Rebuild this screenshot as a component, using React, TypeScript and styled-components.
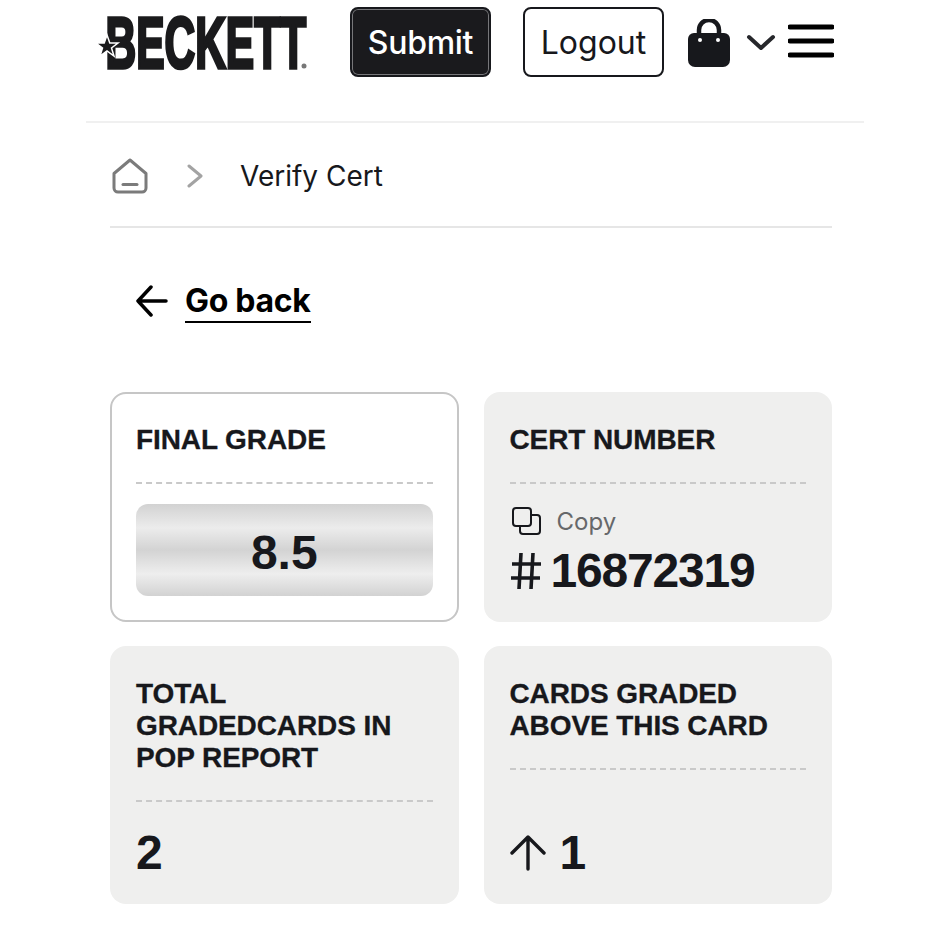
import React from 'react';
import styled, { createGlobalStyle } from 'styled-components';

const GlobalStyle = createGlobalStyle`
  html, body {
    margin: 0;
    padding: 0;
    background: #fff;
    color: #17181c;
    font-family: Inter, "Liberation Sans", sans-serif;
  }
`;

const Page = styled.div`
  width: 950px;
  height: 950px;
  overflow: hidden;
  box-sizing: border-box;
  padding: 0 86px;
`;

const Header = styled.header`
  height: 121px;
  border-bottom: 2px solid #f0f0f0;
  display: flex;
  align-items: flex-start;
  padding-left: 10px;
`;

const LogoWrap = styled.div`
  width: 212px;
  height: 82px;
  margin-top: 3px;
`;

const Button = styled.button<{ $dark?: boolean }>`
  width: 141px;
  height: 70px;
  margin-top: 7px;
  box-sizing: border-box;
  border-radius: 8px;
  border: 2px solid #17181c;
  background: ${p => (p.$dark ? '#1a1a1d' : '#fff')};
  color: ${p => (p.$dark ? '#fff' : '#17181c')};
  box-shadow: ${p => (p.$dark ? 'inset 0 0 0 1px #77777a' : 'none')};
  font-family: Inter, "Liberation Sans", sans-serif;
  font-size: 32px;
  font-weight: ${p => (p.$dark ? 500 : 400)};
  letter-spacing: ${p => (p.$dark ? '-0.3px' : '0')};
  padding: 0;
`;

const SubmitButton = styled(Button)`
  margin-left: 42px;
`;

const LogoutButton = styled(Button)`
  margin-left: 32px;
`;

const IconButton = styled.div`
  display: flex;
  align-items: center;
  margin-left: 24px;
  margin-top: 19px;
`;

const Chevron = styled.svg`
  margin-left: 16px;
`;

const Burger = styled.svg`
  margin-left: 12px;
  margin-top: -4px;
`;

const Main = styled.main`
  padding: 0 32px 0 24px;
`;

const Breadcrumb = styled.nav`
  height: 105px;
  border-bottom: 2px solid #e6e6e6;
  display: flex;
  align-items: center;
  padding: 3px 0 0 2px;
  box-sizing: border-box;
`;

const Crumb = styled.span`
  margin-left: 37px;
  font-size: 28px;
`;

const CrumbChevron = styled.svg`
  margin-left: 39px;
`;

const BackLink = styled.a`
  display: flex;
  align-items: center;
  gap: 17px;
  margin: 54px 0 0 26px;
  height: 40px;
`;

const BackArrow = styled.svg`
  margin-top: -2px;
`;

const BackText = styled.span`
  font-size: 32px;
  font-weight: 700;
  letter-spacing: -0.3px;
  color: #000;
  line-height: 40px;
  border-bottom: 2px solid #000;
`;

const Grid = styled.section`
  display: grid;
  grid-template-columns: 348.5px 348.5px;
  grid-template-rows: 230px 258px;
  gap: 24px 25px;
  margin-top: 70px;
`;

const Card = styled.article<{ $outlined?: boolean }>`
  box-sizing: border-box;
  border-radius: 16px;
  background: ${p => (p.$outlined ? '#fff' : '#efefee')};
  border: ${p => (p.$outlined ? '2px solid #c6c6c6' : 'none')};
  padding: ${p => (p.$outlined ? '30px 24px 24px' : '32px 26px 23px')};
  display: flex;
  flex-direction: column;
`;

const Title = styled.h2`
  margin: 0;
  padding-bottom: 26px;
  border-bottom: 2px dashed #c9c9c9;
  font-family: "Liberation Sans", Arial, sans-serif;
  font-size: 28px;
  line-height: 32px;
  font-weight: 700;
  letter-spacing: -0.1px;
  -webkit-text-stroke: 0.3px #17181c;
`;

const GradeBar = styled.div`
  margin-top: 20px;
  height: 92px;
  box-sizing: border-box;
  padding-top: 5px;
  border-radius: 12px;
  background: linear-gradient(180deg, #d2d2d2 0%, #ececec 26%, #d3d3d3 50%, #eeeeee 76%, #d2d2d2 100%);
  display: flex;
  align-items: center;
  justify-content: center;
`;

const BigNumber = styled.span<{ $tight?: boolean }>`
  font-family: "Liberation Sans", Arial, sans-serif;
  font-size: 48px;
  font-weight: 700;
  line-height: 56px;
  letter-spacing: ${p => (p.$tight ? '-1.2px' : '0')};
`;

const CopyRow = styled.div`
  display: flex;
  align-items: center;
  gap: 16px;
  margin-top: 22px;
  height: 30px;
  color: #66686a;
  font-size: 24px;
  padding-left: 1px;
`;

const CertRow = styled.div`
  display: flex;
  align-items: center;
  gap: 10px;
  margin-top: 7px;
  padding-left: 1px;
`;

const ValueRow = styled.div`
  margin-top: auto;
  display: flex;
  align-items: center;
  gap: 14px;
  height: 56px;
`;

const Logo = () => (
  <svg width="212" height="82" viewBox="0 0 212 82">
    <text
      transform="translate(9.5 65) scale(0.59 1)"
      fontFamily="Liberation Sans, Arial, sans-serif"
      fontWeight="700"
      fontSize="72"
      fill="#1a1a1c"
      stroke="#1a1a1c"
      strokeWidth="3.5"
    >
      BECKETT
    </text>
    <g transform="translate(0 11)">
      <polygon
        points="11,21 13.8,29 22,29 15.5,34 18,42 11,37 4,42 6.5,34 0,29 8.2,29"
        fill="#1a1a1c"
        stroke="#fff"
        strokeWidth="1.5"
      />
      <circle cx="208" cy="52" r="2.500" fill="#777" />
    </g>
  </svg>
);

const App = () => (
  <Page>
    <GlobalStyle />
    <Header>
      <LogoWrap>
        <Logo />
      </LogoWrap>
      <SubmitButton $dark>Submit</SubmitButton>
      <LogoutButton>Logout</LogoutButton>
      <IconButton>
        <svg width="42" height="48" viewBox="0 0 42 48">
          <path d="M11 16V11a10 10 0 0 1 20 0v5" fill="none" stroke="#17181c" strokeWidth="4.500" />
          <path d="M6 14h30a6 6 0 0 1 6 6v21a7 7 0 0 1-7 7H7a7 7 0 0 1-7-7V20a6 6 0 0 1 6-6z" fill="#17181c" />
          <circle cx="12" cy="21" r="2" fill="#fff" />
          <circle cx="30" cy="21" r="2" fill="#fff" />
        </svg>
        <Chevron width="30" height="18" viewBox="0 0 30 18">
          <path d="M3 3l12 11L27 3" fill="none" stroke="#26272b" strokeWidth="4" strokeLinecap="round" strokeLinejoin="round" />
        </Chevron>
        <Burger width="46" height="34" viewBox="0 0 46 34">
          <path d="M2 3h42M2 17h42M2 31h42" fill="none" stroke="#000" strokeWidth="5" strokeLinecap="round" />
        </Burger>
      </IconButton>
    </Header>
    <Main>
      <Breadcrumb>
        <svg width="36" height="36" viewBox="0 0 36 36">
          <path
            d="M2 15.500L18 2l16 13.500V30a4 4 0 0 1-4 4H6a4 4 0 0 1-4-4z"
            fill="none"
            stroke="#7b7b7b"
            strokeWidth="3"
            strokeLinejoin="round"
          />
          <path d="M11 26.500h14" stroke="#7b7b7b" strokeWidth="3" strokeLinecap="round" />
        </svg>
        <CrumbChevron width="16" height="24" viewBox="0 0 16 24">
          <path d="M2 2l12 10L2 22" fill="none" stroke="#a3a3a3" strokeWidth="3" strokeLinecap="round" strokeLinejoin="round" />
        </CrumbChevron>
        <Crumb>Verify Cert</Crumb>
      </Breadcrumb>
      <BackLink>
        <BackArrow width="32" height="32" viewBox="0 0 32 32">
          <path d="M30 16H2M15 2L2 16l13 14" fill="none" stroke="#000" strokeWidth="3.500" strokeLinecap="round" strokeLinejoin="round" />
        </BackArrow>
        <BackText>Go back</BackText>
      </BackLink>
      <Grid>
        <Card $outlined>
          <Title>FINAL GRADE</Title>
          <GradeBar>
            <BigNumber>8.5</BigNumber>
          </GradeBar>
        </Card>
        <Card>
          <Title>CERT NUMBER</Title>
          <CopyRow>
            <svg width="30" height="30" viewBox="0 0 30 30">
              <path
                d="M5 2h12a3 3 0 0 1 3 3v12a3 3 0 0 1-3 3H5a3 3 0 0 1-3-3V5a3 3 0 0 1 3-3zM20 9h6a3 3 0 0 1 3 3v13a3 3 0 0 1-3 3H12a3 3 0 0 1-3-3v-5"
                fill="none"
                stroke="#17181c"
                strokeWidth="2"
              />
            </svg>
            Copy
          </CopyRow>
          <CertRow>
            <svg width="30" height="38" viewBox="0 0 30 38">
              <path d="M10 1L8 37M22 1l-2 36M1 12h29M0 26h29" fill="none" stroke="#17181c" strokeWidth="3.600" />
            </svg>
            <BigNumber $tight>16872319</BigNumber>
          </CertRow>
        </Card>
        <Card>
          <Title>TOTAL GRADEDCARDS IN POP REPORT</Title>
          <ValueRow>
            <BigNumber>2</BigNumber>
          </ValueRow>
        </Card>
        <Card>
          <Title>CARDS GRADED ABOVE THIS CARD</Title>
          <ValueRow>
            <svg width="36" height="36" viewBox="0 0 36 36">
              <path d="M18 34V3M2 18L18 2l16 16" fill="none" stroke="#17181c" strokeWidth="3.400" strokeLinecap="round" strokeLinejoin="round" />
            </svg>
            <BigNumber>1</BigNumber>
          </ValueRow>
        </Card>
      </Grid>
    </Main>
  </Page>
);

export default App;
